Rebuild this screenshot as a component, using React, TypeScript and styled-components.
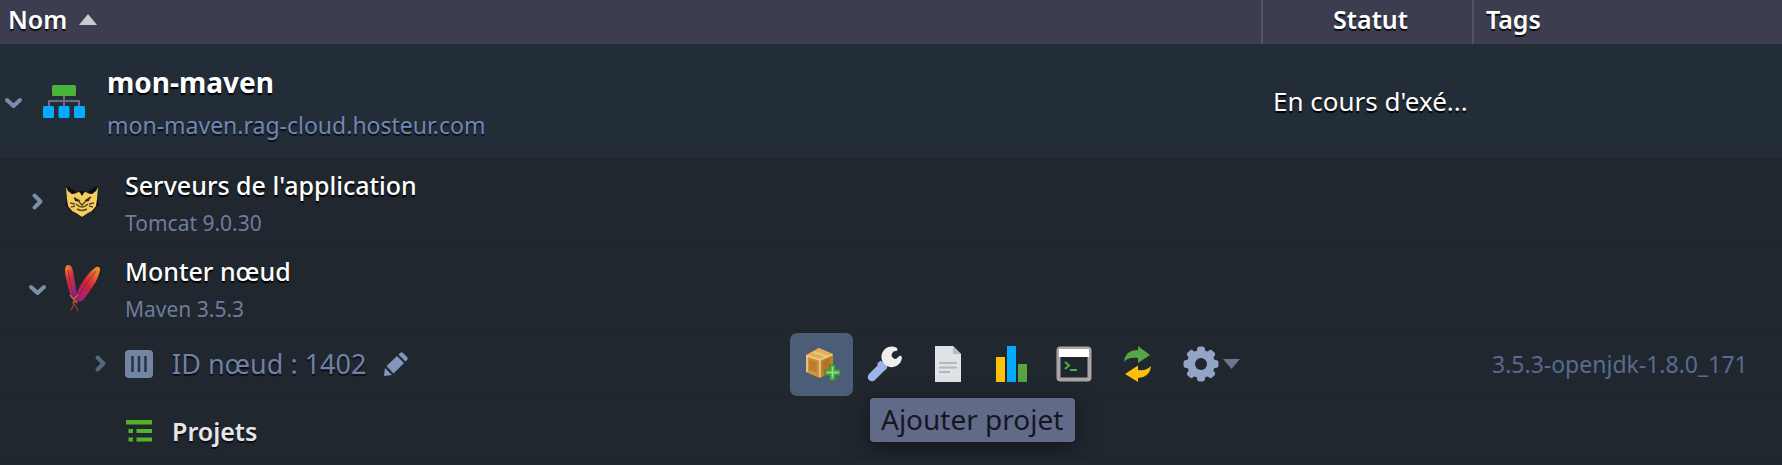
import React from 'react';
import styled, { createGlobalStyle, css } from 'styled-components';

const GlobalStyle = createGlobalStyle`
  *, *::before, *::after { box-sizing: border-box; }
  body {
    margin: 0;
    background: #20272f;
    color: #fff;
    font-family: "Noto Sans", "Open Sans", sans-serif;
  }
  svg { display: block; flex: none; }
`;

const Grid = styled.table`
  width: 100%;
  table-layout: fixed;
  border-collapse: separate;
  border-spacing: 0;
`;

const HeadCell = styled.th<{ $align?: 'left' | 'center'; $width?: number; $divided?: boolean }>`
  height: 44px;
  padding: 0 6px 6px 12px;
  width: ${(p) => (p.$width ? `${p.$width}px` : 'auto')};
  background: #3c3e50;
  border-left: ${(p) => (p.$divided ? '2px solid #505266' : '0')};
  color: #fff;
  font-size: 25px;
  line-height: 36px;
  font-weight: 600;
  text-align: ${(p) => p.$align ?? 'left'};
  text-shadow: 0 2px 1px rgba(0, 0, 0, 0.8);
`;

const plainButton = css`
  display: flex;
  align-items: center;
  border: 0;
  margin: 0;
  padding: 0;
  background: transparent;
  color: inherit;
  font: inherit;
  text-shadow: inherit;
  cursor: pointer;
`;

const SortButton = styled.button`
  ${plainButton}
  gap: 12px;
  margin-left: -4px;
`;

const Row = styled.tr<{ $top?: boolean }>`
  background: ${(p) => (p.$top ? '#232d37' : '#20272f')};
`;

const Cell = styled.td<{ $indent?: number }>`
  padding: 0 0 0 ${(p) => p.$indent ?? 0}px;
  border-bottom: 1px solid #252322;
  white-space: nowrap;
`;

const NameLine = styled.div<{ $height: number; $padTop?: number }>`
  display: flex;
  align-items: center;
  min-height: ${(p) => p.$height}px;
  padding-top: ${(p) => p.$padTop ?? 0}px;
`;

const Toggle = styled.button<{ $dim?: boolean }>`
  ${plainButton}
  justify-content: center;
  flex: none;
  width: 28px;
  height: 28px;
  color: ${(p) => (p.$dim ? '#566780' : '#7a8eac')};
`;

const IconSlot = styled.span<{ $width: number; $gap: number }>`
  display: flex;
  justify-content: center;
  flex: none;
  width: ${(p) => p.$width}px;
  margin-right: ${(p) => p.$gap}px;
`;

const Labels = styled.div<{ $large?: boolean }>`
  display: flex;
  flex-direction: column;
  padding-top: ${(p) => (p.$large ? 8 : 4)}px;
`;

const EnvName = styled.strong`
  font-size: 28px;
  line-height: 40px;
  font-weight: 700;
  text-shadow: 0 2px 1px #000;
`;

const EnvLink = styled.a`
  color: #7187b6;
  font-size: 23px;
  line-height: 46px;
  text-decoration: none;
  text-shadow: 0 2px 1px #0b0e13;
`;

const LayerName = styled.span`
  font-size: 25px;
  line-height: 38px;
  font-weight: 500;
  text-shadow: 0 2px 1px #000;
`;

const LayerStack = styled.span`
  color: #6f7c9c;
  font-size: 21px;
  line-height: 38px;
`;

const NodeId = styled.span`
  color: #7081a8;
  font-size: 27px;
  line-height: 38px;
  text-shadow: 0 2px 1px #0b0e13;
`;

const EditButton = styled.button`
  ${plainButton}
  margin-left: 18px;
`;

const ProjectsLabel = styled.span`
  color: #e6e6e8;
  font-size: 25px;
  line-height: 38px;
  font-weight: 600;
  text-shadow: 0 2px 1px #0b0e13;
`;

const StatusText = styled.span`
  padding-left: 12px;
  font-size: 26px;
  line-height: 38px;
  text-shadow: 0 2px 1px #000;
`;

const TagText = styled.span`
  padding-left: 20px;
  color: #5a6b90;
  font-size: 23px;
  line-height: 36px;
`;

const Toolbar = styled.div`
  display: flex;
  margin-left: auto;
  padding-right: 21px;
`;

const ToolItem = styled.div`
  position: relative;
`;

const ToolButton = styled.button<{ $active?: boolean; $menu?: boolean }>`
  ${plainButton}
  justify-content: ${(p) => (p.$menu ? 'flex-start' : 'center')};
  gap: 4px;
  width: ${(p) => (p.$menu ? 72 : 63)}px;
  height: 63px;
  padding-left: ${(p) => (p.$menu ? 15 : 0)}px;
  border-radius: 7px;
  background: ${(p) => (p.$active ? '#4c5d78' : 'transparent')};
`;

const Tooltip = styled.span`
  position: absolute;
  top: 65px;
  left: 80px;
  z-index: 1;
  padding: 2px 12px 4px 11px;
  border-radius: 4px;
  background: #616a88;
  color: #15171f;
  font-size: 28px;
  line-height: 38px;
  white-space: nowrap;
  box-shadow: 0 6px 26px rgba(0, 0, 0, 0.45);
`;

const Chevron = ({ open }: { open?: boolean }) => (
  <svg width="22" height="22" viewBox="0 0 22 22" fill="none" stroke="currentColor" strokeWidth="4" strokeLinecap="round" strokeLinejoin="round" aria-hidden="true">
    <path d={open ? 'M4 10l6.500 6 6.500-6' : 'M7.500 4.500l6 6-6 6'} />
  </svg>
);

const SortArrow = () => (
  <svg width="18" height="11" viewBox="0 0 20 12" aria-hidden="true">
    <path d="M10 0L20 12H0z" fill="#c9c9d0" />
  </svg>
);

const TopologyIcon = () => (
  <svg width="42" height="33" viewBox="0 0 42 33" aria-hidden="true">
    <path d="M21 11v10M6 21v-5h30v5" fill="none" stroke="#66707c" strokeWidth="2" />
    <rect x="9" y="0" width="24" height="11" rx="1.5" fill="#48b53a" />
    <rect x="0" y="21" width="11" height="12" rx="1.5" fill="#06aaff" />
    <rect x="15.500" y="21" width="11" height="12" rx="1.5" fill="#06aaff" />
    <rect x="31" y="21" width="11" height="12" rx="1.5" fill="#06aaff" />
  </svg>
);

const TomcatIcon = () => (
  <svg width="34" height="34" viewBox="0 0 34 34" aria-hidden="true">
    <path d="M1 1l3 1 9 6h8l9-6 3-1-1 12 2 8-3 1-3 5h-3l-8 6-8-6H6l-3-5-3-2 3-7z" fill="#0d0f12" />
    <path d="M1 2l2 4 4 3 7-2 3 2 3-2 7 2 4-3 2-4-1 12-1 7-4 5-4 2-6 4-6-4-4-2-4-5-1-7z" fill="#f6cd63" />
    <path d="M3 2l9 6-5 1zM31 2l-9 6 5 1zM14 6h6l-3 5z" fill="#0d0f12" />
    <path d="M9 13l6 3M26 12l-6 4M5 18l5 1M6 22l4-1M29 18l-5 1M28 22l-4-1M11 19q6 6 12 0M14 17l3 3 3-3M12 24q5 3 10 0" fill="none" stroke="#5b4a22" strokeWidth="1.600" />
    <path d="M9 12l6 5-5-1zM25 12l-6 5 5-1z" fill="#2a2415" />
  </svg>
);

const MavenIcon = () => (
  <svg width="37" height="48" viewBox="0 0 37 48" aria-hidden="true">
    <defs>
      <linearGradient id="featherLeft" x1="0" y1="0" x2="0.4" y2="1">
        <stop offset="0" stopColor="#f7a021" />
        <stop offset="0.4" stopColor="#d9313a" />
        <stop offset="1" stopColor="#8c2379" />
      </linearGradient>
      <linearGradient id="featherRight" x1="1" y1="0" x2="0.1" y2="1">
        <stop offset="0" stopColor="#f9a51d" />
        <stop offset="0.3" stopColor="#e3522f" />
        <stop offset="0.55" stopColor="#cf2040" />
        <stop offset="1" stopColor="#8e2683" />
      </linearGradient>
    </defs>
    <path d="M4 1q4 0 5 6l2 12 2 11-2 6q-4-2-6-10Q1 12 1 5q1-4 3-4z" fill="url(#featherLeft)" />
    <path d="M32 3q4-1 4 3-2 10-9 19-5 8-9 12l-6 1q-1-5 3-14Q23 9 32 3z" fill="url(#featherRight)" />
    <path d="M4 6q3 20 7 30M32 7Q20 20 12 37" fill="none" stroke="#8f1c4c" strokeWidth="1" opacity="0.700" />
    <path d="M14 31q-5 4-4 8M6 31l7 8" fill="none" stroke="#d0632c" strokeWidth="1.500" />
    <path d="M10 36q0 6-3 10M8 38q4 3 6 9" fill="none" stroke="#8e4334" strokeWidth="1.300" />
  </svg>
);

const ContainerIcon = () => (
  <svg width="28" height="28" viewBox="0 0 28 28" aria-hidden="true">
    <rect width="28" height="28" rx="4" fill="#7285a4" />
    <path d="M7.500 6v16M14 6v16M20.500 6v16" stroke="#2b3440" strokeWidth="2.500" />
  </svg>
);

const PencilIcon = () => (
  <svg width="24" height="24" viewBox="0 0 24 24" fill="#8296ba" aria-hidden="true">
    <path d="M1 16l7 7-8 1zM2.500 14L13 4l7 7L9.500 21.500zM14.500 2.500L16 1q1.500-1.500 3 0l4 4q1.500 1.500 0 3l-1.500 1.500z" />
  </svg>
);

const ProjectsIcon = () => (
  <svg width="26" height="22" viewBox="0 0 26 22" fill="#55b32b" aria-hidden="true">
    <path d="M0 0h26v4.500H0zM2.500 9h4.500v4H2.500zM10.500 9H26v4H10.500zM2.500 17.500h4.500v4H2.500zM10.500 17.500H26v4H10.500z" />
  </svg>
);

const BoxAddIcon = () => (
  <svg width="36" height="36" viewBox="0 0 36 36" aria-hidden="true">
    <path d="M15 2l14 6v17l-13 7-14-6V9z" fill="#b97a29" />
    <path d="M15 2l14 6-13 6L2 9z" fill="#e0ae5a" />
    <path d="M2 9l14 5v18L2 26z" fill="#cf9440" />
    <path d="M16 14l13-6v17l-13 7z" fill="#bd7f2e" />
    <path d="M2.500 9.500L16 14l12.500-5.500M16 14v17M3 10v16" fill="none" stroke="#efcd8b" strokeWidth="1.500" />
    <path d="M8 6.500l14 5 3-1.500-14-5z" fill="#f0d298" opacity="0.600" />
    <path d="M5 13l8 3v11l-8-3zM19 16l7-4v10l-7 4z" fill="#a9691f" opacity="0.500" />
    <path d="M26 19h5v5h5v5h-5v5h-5v-5h-5v-5h5z" fill="#5fba55" stroke="#2f8a35" strokeWidth="1.200" />
    <path d="M28.500 21v10M23 26.500h11" stroke="#9be08c" strokeWidth="1.200" />
  </svg>
);

const WrenchIcon = () => (
  <svg width="36" height="36" viewBox="0 0 36 36" aria-hidden="true">
    <path d="M5 31L16 20" stroke="#9bb5e8" strokeWidth="8.500" strokeLinecap="round" />
    <path d="M13.500 14.500l7 7-3.500 3.500-7-7z" fill="#9bb5e8" />
    <path d="M30 2a10.300 10.300 0 1 0 5 9l-2-1.500-4 3.500q-3 0-4.500-3 0-3 2-4.500l4-1z" fill="#eeeeec" />
  </svg>
);

const DocumentIcon = () => (
  <svg width="36" height="36" viewBox="0 0 36 36" aria-hidden="true">
    <path d="M5 0h18l8 8v28H5z" fill="#dfe3e6" />
    <path d="M23 0l8 8h-8z" fill="#b4bcc4" />
    <path d="M9 17h18M9 21.500h18M9 26h11" stroke="#b3b8bd" strokeWidth="2" />
  </svg>
);

const ChartIcon = () => (
  <svg width="36" height="36" viewBox="0 0 36 36" aria-hidden="true">
    <rect x="3" y="11" width="9" height="25" fill="#ffc107" />
    <rect x="14" y="0" width="9" height="36" fill="#06aaff" />
    <rect x="25" y="18" width="9" height="18" fill="#56a445" />
  </svg>
);

const ConsoleIcon = () => (
  <svg width="36" height="36" viewBox="0 0 36 36" aria-hidden="true">
    <rect x="2.500" y="2.500" width="31" height="31" rx="2" fill="#1e272e" stroke="#a9a6a5" strokeWidth="4" />
    <rect x="3" y="3" width="30" height="8" fill="#fff" />
    <path d="M9 16l4 3.500L9 23M14 24h7" fill="none" stroke="#4cb13e" strokeWidth="2" />
  </svg>
);

const SyncIcon = () => (
  <svg width="36" height="36" viewBox="0 0 36 36" aria-hidden="true">
    <path d="M5 16Q6 4 19 4V0l12 9-12 8v-5Q9 11 5 16z" fill="#56a445" />
    <path d="M32 20q-1 11-13 12v4L6 28l13-8.500V24q9 1 13-4z" fill="#ffbf08" />
  </svg>
);

const GearIcon = () => (
  <svg width="36" height="36" viewBox="0 0 36 36" aria-hidden="true">
    <g fill="#93a5c4">
      {[0, 45, 90, 135].map((turn) => (
        <rect key={turn} x="14" y="0.500" width="8" height="35" rx="3" transform={`rotate(${turn} 18 18)`} />
      ))}
      <circle cx="18" cy="18" r="14" />
    </g>
    <circle cx="18" cy="18" r="6" fill="#20272f" />
  </svg>
);

const MenuCaret = () => (
  <svg width="17" height="10" viewBox="0 0 17 10" aria-hidden="true">
    <path d="M0 0h17L8.500 10z" fill="#66778f" />
  </svg>
);

const tools = [
  { label: 'Configuration', icon: <WrenchIcon /> },
  { label: 'Journaux', icon: <DocumentIcon /> },
  { label: 'Statistiques', icon: <ChartIcon /> },
  { label: 'Console', icon: <ConsoleIcon /> },
  { label: 'Redémarrer', icon: <SyncIcon /> },
];

const layers = [
  { name: "Serveurs de l'application", stack: 'Tomcat 9.0.30', icon: <TomcatIcon />, open: false },
  { name: 'Monter nœud', stack: 'Maven 3.5.3', icon: <MavenIcon />, open: true },
];

export default function App() {
  return (
    <>
      <GlobalStyle />
      <Grid>
        <thead>
          <tr>
            <HeadCell scope="col" aria-sort="ascending">
              <SortButton type="button">
                Nom
                <SortArrow />
              </SortButton>
            </HeadCell>
            <HeadCell scope="col" $width={211} $align="center" $divided>Statut</HeadCell>
            <HeadCell scope="col" $width={310} $divided>Tags</HeadCell>
          </tr>
        </thead>
        <tbody>
          <Row $top>
            <Cell>
              <NameLine $height={114}>
                <Toggle type="button" aria-expanded="true" aria-label="Environnement"><Chevron open /></Toggle>
                <IconSlot $width={72} $gap={7}><TopologyIcon /></IconSlot>
                <Labels $large>
                  <EnvName>mon-maven</EnvName>
                  <EnvLink href="#mon-maven">mon-maven.rag-cloud.hosteur.com</EnvLink>
                </Labels>
              </NameLine>
            </Cell>
            <Cell><StatusText>En cours d'exé...</StatusText></Cell>
            <Cell />
          </Row>
          {layers.map((layer) => (
            <Row key={layer.name}>
              <Cell $indent={24}>
                <NameLine $height={85}>
                  <Toggle type="button" aria-expanded={layer.open} aria-label={layer.name}><Chevron open={layer.open} /></Toggle>
                  <IconSlot $width={60} $gap={13}>{layer.icon}</IconSlot>
                  <Labels>
                    <LayerName>{layer.name}</LayerName>
                    <LayerStack>{layer.stack}</LayerStack>
                  </Labels>
                </NameLine>
              </Cell>
              <Cell />
              <Cell />
            </Row>
          ))}
          <Row>
            <Cell $indent={87}>
              <NameLine $height={66}>
                <Toggle type="button" aria-expanded="false" aria-label="ID nœud" $dim><Chevron /></Toggle>
                <IconSlot $width={48} $gap={9}><ContainerIcon /></IconSlot>
                <NodeId>ID nœud : 1402</NodeId>
                <EditButton type="button" aria-label="Modifier"><PencilIcon /></EditButton>
                <Toolbar>
                  <ToolItem>
                    <ToolButton type="button" $active aria-describedby="add-project"><BoxAddIcon /></ToolButton>
                    <Tooltip id="add-project" role="tooltip">Ajouter projet</Tooltip>
                  </ToolItem>
                  {tools.map((tool) => (
                    <ToolButton key={tool.label} type="button" aria-label={tool.label}>{tool.icon}</ToolButton>
                  ))}
                  <ToolButton type="button" $menu aria-haspopup="menu" aria-label="Options">
                    <GearIcon />
                    <MenuCaret />
                  </ToolButton>
                </Toolbar>
              </NameLine>
            </Cell>
            <Cell />
            <Cell><TagText>3.5.3-openjdk-1.8.0_171</TagText></Cell>
          </Row>
          <Row>
            <Cell $indent={115}>
              <NameLine $height={60} $padTop={6}>
                <IconSlot $width={48} $gap={9}><ProjectsIcon /></IconSlot>
                <ProjectsLabel>Projets</ProjectsLabel>
              </NameLine>
            </Cell>
            <Cell />
            <Cell />
          </Row>
        </tbody>
      </Grid>
    </>
  );
}
